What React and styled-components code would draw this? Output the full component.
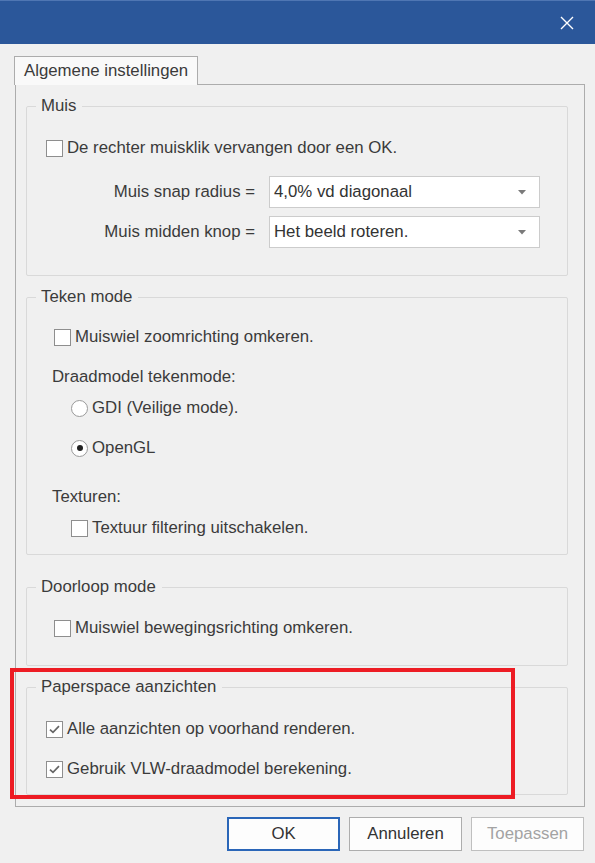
import styled, { createGlobalStyle } from "styled-components";

const GlobalStyle = createGlobalStyle`
  html, body {
    margin: 0;
    padding: 0;
    background: #f0f0f0;
  }
  body {
    font-family: "Liberation Sans", Arial, sans-serif;
    font-size: 16.8px;
    color: #3b3b3b;
  }
`;

const CheckBox = ({ checked, label }) => (
  <CheckLabel>
    <Box>
      {checked && (
        <svg width="11" height="9" viewBox="0 0 11 9">
          <path d="M1 4.6 L4 7.4 L10 1.2" fill="none" stroke="#666666" strokeWidth="1.7" />
        </svg>
      )}
    </Box>
    {label}
  </CheckLabel>
);

const Radio = ({ checked, label }) => (
  <CheckLabel>
    <Circle>{checked && <Dot />}</Circle>
    {label}
  </CheckLabel>
);

const Select = ({ value }) => (
  <Dropdown>
    <span>{value}</span>
    <svg width="8" height="5" viewBox="0 0 8 5">
      <path d="M0 0 H8 L4 4.5 Z" fill="#7a7a7a" />
    </svg>
  </Dropdown>
);

const App = () => {
  return (
    <Window>
      <GlobalStyle />
      <TitleBar>
        <svg width="14" height="14" viewBox="0 0 14 14">
          <path d="M1 1 L13 13 M13 1 L1 13" stroke="#ffffff" strokeWidth="1.4" />
        </svg>
      </TitleBar>
      <Content>
        <Tab>Algemene instellingen</Tab>
        <Panel>
          <Group $mt={11}>
            <legend>Muis</legend>
            <GroupBody $indent={19} $top={20} $bottom={27}>
              <CheckBox label="De rechter muisklik vervangen door een OK." />
              <FieldGrid>
                <FieldLabel>Muis snap radius =</FieldLabel>
                <Select value="4,0% vd diagonaal" />
                <FieldLabel>Muis midden knop =</FieldLabel>
                <Select value="Het beeld roteren." />
              </FieldGrid>
            </GroupBody>
          </Group>

          <Group $mt={11}>
            <legend>Teken mode</legend>
            <GroupBody $indent={27} $top={18} $bottom={14}>
              <CheckBox label="Muiswiel zoomrichting omkeren." />
              <Caption $gap={16}>Draadmodel tekenmode:</Caption>
              <Row $gap={7} $indent={17}>
                <Radio label="GDI (Veilige mode)." />
              </Row>
              <Row $gap={16} $indent={17}>
                <Radio checked label="OpenGL" />
              </Row>
              <Caption $gap={25}>Texturen:</Caption>
              <Row $gap={7} $indent={17}>
                <CheckBox label="Textuur filtering uitschakelen." />
              </Row>
            </GroupBody>
          </Group>

          <Group $mt={22}>
            <legend>Doorloop mode</legend>
            <GroupBody $indent={27} $top={19} $bottom={25}>
              <CheckBox label="Muiswiel bewegingsrichting omkeren." />
            </GroupBody>
          </Group>

          <Group $mt={11}>
            <legend>Paperspace aanzichten</legend>
            <GroupBody $indent={19} $top={20} $bottom={13}>
              <CheckBox checked label="Alle aanzichten op voorhand renderen." />
              <Row $gap={16}>
                <CheckBox checked label="Gebruik VLW-draadmodel berekening." />
              </Row>
            </GroupBody>
          </Group>
        </Panel>
        <Buttons>
          <Button $primary>OK</Button>
          <Button>Annuleren</Button>
          <Button $disabled>Toepassen</Button>
        </Buttons>
      </Content>
      <Highlight />
    </Window>
  );
};

const Window = styled.div`
  position: relative;
  width: 595px;
  height: 863px;
  overflow: hidden;
  background: #f0f0f0;
`;

const TitleBar = styled.div`
  box-sizing: border-box;
  height: 44px;
  border-top: 1px solid #4f76b3;
  background: #2b579a;
  display: flex;
  align-items: center;
  justify-content: flex-end;
  padding-right: 21px;
`;

const Content = styled.div`
  padding: 12px 0 0 15px;
`;

const Tab = styled.div`
  position: relative;
  z-index: 1;
  display: inline-block;
  box-sizing: border-box;
  height: 29px;
  margin: 0 0 -1px -1px;
  padding: 0 9px 0 9px;
  line-height: 28px;
  background: #f9f9f9;
  border: 1px solid #acacac;
  border-bottom: none;
`;

const Panel = styled.div`
  box-sizing: border-box;
  width: 570px;
  padding: 0 16px 11px 10px;
  border: 1px solid #acacac;
  background: #f0f0f0;
`;

const Group = styled.fieldset`
  margin: ${(p) => p.$mt}px 0 0;
  padding: 0;
  border: 1px solid #d9d9d9;
  border-radius: 2px;
  min-width: 0;

  legend {
    margin-left: 9px;
    padding: 0 6px 0 5px;
    line-height: 20px;
  }
`;

const GroupBody = styled.div`
  display: flex;
  flex-direction: column;
  align-items: flex-start;
  padding: ${(p) => p.$top}px 0 ${(p) => p.$bottom}px ${(p) => p.$indent}px;
`;

const CheckLabel = styled.div`
  display: flex;
  align-items: center;
  gap: 4px;
  height: 24px;
  white-space: nowrap;
`;

const Box = styled.span`
  box-sizing: border-box;
  width: 17px;
  height: 17px;
  border: 1px solid #8e8e8e;
  background: #ffffff;
  display: flex;
  align-items: center;
  justify-content: center;
`;

const Circle = styled.span`
  box-sizing: border-box;
  width: 17px;
  height: 17px;
  border: 1px solid #9a9a9a;
  border-radius: 50%;
  background: #ffffff;
  display: flex;
  align-items: center;
  justify-content: center;
`;

const Dot = styled.span`
  width: 6px;
  height: 6px;
  border-radius: 50%;
  background: #222222;
`;

const Caption = styled.div`
  margin: ${(p) => p.$gap}px 0 0 -2px;
  line-height: 24px;
`;

const Row = styled.div`
  margin: ${(p) => p.$gap}px 0 0 ${(p) => p.$indent || 0}px;
`;

const FieldGrid = styled.div`
  display: grid;
  grid-template-columns: 209px 271px;
  column-gap: 14px;
  row-gap: 8px;
  margin-top: 16px;
`;

const FieldLabel = styled.div`
  text-align: right;
  align-self: center;
  white-space: nowrap;
`;

const Dropdown = styled.div`
  box-sizing: border-box;
  height: 32px;
  border: 1px solid #cccccc;
  background: #ffffff;
  display: flex;
  align-items: center;
  justify-content: space-between;
  padding: 0 13px 0 4px;
  color: #333333;
`;

const Buttons = styled.div`
  display: flex;
  justify-content: flex-end;
  gap: 9px;
  margin-top: 10px;
  padding-right: 11px;
`;

const Button = styled.div`
  box-sizing: border-box;
  width: 113px;
  height: 34px;
  display: flex;
  align-items: center;
  justify-content: center;
  background: #fdfdfd;
  border: ${(p) => (p.$primary ? "2px solid #2a66b8" : "1px solid #adadad")};
  color: ${(p) => (p.$disabled ? "#a3a3a3" : "#333333")};
  ${(p) => p.$disabled && "border-color: #bfbfbf;"}
`;

const Highlight = styled.div`
  position: absolute;
  left: 10px;
  top: 668px;
  width: 505px;
  height: 131px;
  box-sizing: border-box;
  border: 4px solid #ed1c24;
  pointer-events: none;
`;

export default App;
